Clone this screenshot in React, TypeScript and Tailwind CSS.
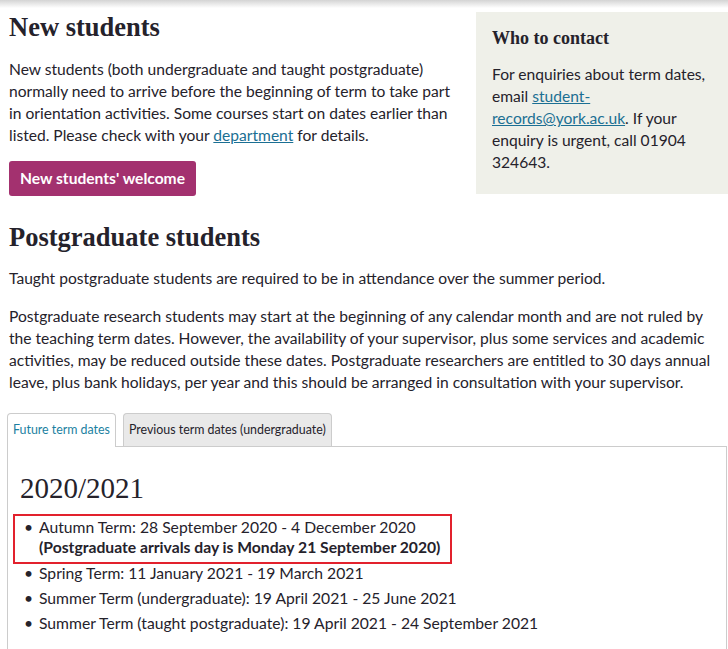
export default function App() {
  const body = "font-['Lato','Noto_Sans',sans-serif]";
  const serif = "font-['Liberation_Serif','DejaVu_Serif',serif]";
  const link = "text-[#1b6f93] underline";

  const terms = [
    "Spring Term: 11 January 2021 - 19 March 2021",
    "Summer Term (undergraduate): 19 April 2021 - 25 June 2021",
    "Summer Term (taught postgraduate): 19 April 2021 - 24 September 2021",
  ];

  return (
    <div className={`min-h-[649px] bg-white text-[#25222b] ${body}`}>
      <div className="h-[8px] bg-gradient-to-b from-[#d4d4d4] to-white" />

      <div className="flex items-start gap-[7px] pl-[9px]">
        <div className="w-[460px]">
          <h1 className={`${serif} mt-[2px] text-[26.5px] font-bold leading-[34px]`}>New students</h1>
          <p className="mt-[14px] text-[15.6px] leading-[22px]">
            New students (both undergraduate and taught postgraduate)
            <br />
            normally need to arrive before the beginning of term to take part
            <br />
            in orientation activities. Some courses start on dates earlier than
            <br />
            listed. Please check with your <a className={link}>department</a> for details.
          </p>
          <button className="mt-[15px] h-[35px] rounded-[3px] bg-[#a3316f] px-[11px] text-[15.6px] font-bold text-white">
            New students' welcome
          </button>
        </div>

        <aside className="mt-[4px] h-[182px] w-[252px] bg-[#eff0e9] px-[16px] pt-[15px]">
          <h2 className={`${serif} text-[18px] font-bold leading-[22px]`}>Who to contact</h2>
          <p className="mt-[14px] text-[15.6px] leading-[22px]">
            For enquiries about term dates,
            <br />
            email <a className={link}>student-</a>
            <br />
            <a className={link}>records@york.ac.uk</a>. If your
            <br />
            enquiry is urgent, call 01904
            <br />
            324643.
          </p>
        </aside>
      </div>

      <div className="pl-[9px]">
        <h1 className={`${serif} mt-[24px] text-[26.5px] font-bold leading-[34px]`}>Postgraduate students</h1>
        <p className="mt-[13px] text-[15.6px] leading-[22px]">
          Taught postgraduate students are required to be in attendance over the summer period.
        </p>
        <p className="mt-[16px] whitespace-nowrap text-[15.6px] leading-[22px]">
          Postgraduate research students may start at the beginning of any calendar month and are not ruled by
          <br />
          the teaching term dates. However, the availability of your supervisor, plus some services and academic
          <br />
          activities, may be reduced outside these dates. Postgraduate researchers are entitled to 30 days annual
          <br />
          leave, plus bank holidays, per year and this should be arranged in consultation with your supervisor.
        </p>
      </div>

      <div className="ml-[7px] mr-[1px] mt-[20px]">
        <div className="flex items-end gap-[7px]">
          <div className="relative z-10 -mb-px flex h-[34px] items-center rounded-t-[4px] border border-b-0 border-[#cccccc] bg-white px-[5px] text-[12.4px] text-[#1b7fa1]">
            Future term dates
          </div>
          <div className="flex h-[33px] items-center rounded-t-[4px] border border-b-0 border-[#cccccc] bg-[#e9e9e9] px-[5px] text-[12.4px] text-[#25222b]">
            Previous term dates (undergraduate)
          </div>
        </div>
        <div className="h-[210px] border border-b-0 border-[#cccccc] px-[12px] pt-[24px]">
          <h2 className={`${serif} text-[29px] leading-[34px]`}>2020/2021</h2>
          <ul className="mt-[9px] text-[15.7px] leading-[20px]">
            <li className="-ml-[7px] flex w-[439px] border-2 border-[#e2212d] pb-[5px] pl-[5px] pt-[1px]">
              <span className="w-[19px] pl-[4px]">•</span>
              <div>
                Autumn Term: 28 September 2020 - 4 December 2020
                <div className="font-bold">(Postgraduate arrivals day is Monday 21 September 2020)</div>
              </div>
            </li>
            {terms.map((t, i) => (
              <li key={t} className={`flex ${i === 0 ? "-mt-[1px]" : "mt-[5px]"}`}>
                <span className="w-[19px] pl-[4px]">•</span>
                <span>{t}</span>
              </li>
            ))}
          </ul>
        </div>
      </div>
    </div>
  );
}
